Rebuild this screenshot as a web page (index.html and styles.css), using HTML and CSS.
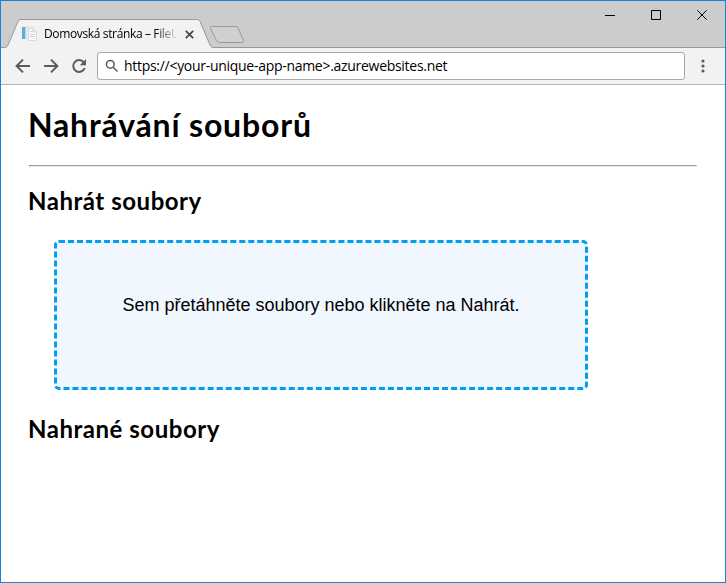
FILE: index.html
```html
<!DOCTYPE html>
<html lang="cs">
<head>
<meta charset="utf-8">
<title>Domovská stránka – FileUploader</title>
<link rel="stylesheet" href="styles.css">
</head>
<body>
<div class="window">
  <header class="titlebar">
    <svg class="tabs" width="250" height="47" viewBox="1 1 250 47">
      <path class="strip-line" d="M1 47.5H251"/>
      <path class="new-tab" d="M211.5 26.5H236Q237.5 26.500 238 28L243.500 40.500Q244.300 42.500 242 42.500H219.500Q217.500 42.500 216.500 40.500L210.500 28.500Q210 26.500 211.500 26.500Z"/>
      <path class="tab-fill" d="M1 48V47.500H5Q7 47.500 8 45L18 21.500Q19 19.500 21 19.500H197Q199 19.500 200 21.500L210 45Q211 47.500 213 47.500V48Z"/>
      <path class="tab-line" d="M1 47.500H5Q7 47.500 8 45L18 21.500Q19 19.500 21 19.500H197Q199 19.500 200 21.500L210 45Q211 47.500 213 47.500"/>
    </svg>
    <div class="tab">
      <svg class="favicon" width="16" height="16" viewBox="0 0 16 16">
        <path fill="#e4e9f0" d="M3 0h9v14H3z"/>
        <path fill="#65acd5" d="M0 1h3v12H0z"/>
        <path fill="#b5d6e8" d="M3 1h1v12H3z"/>
        <path fill="#f9fafc" stroke="#d3dae6" d="M6.500 2.500h5l3 3v9h-8z"/>
        <path fill="none" stroke="#c9d1de" d="M8 5.500h3M8 8.500h5M8 10.500h5M11.500 3v3h3"/>
      </svg>
      <span class="tab-title">Domovská stránka – FileU</span>
      <svg class="tab-close" width="9" height="9" viewBox="0 0 9 9"><path d="M.8.8l7.400 7.400M8.200.8L.8 8.200"/></svg>
    </div>
    <svg class="controls" width="106" height="12" viewBox="604 9 106 12">
      <path d="M605 15.500h10M651.500 10.500h9v9h-9zM697.300 10.300l9.400 9.400M706.700 10.300l-9.400 9.400"/>
    </svg>
  </header>
  <nav class="toolbar">
    <svg class="nav-icons" width="74" height="18" viewBox="14 57 74 18">
      <path d="M30 66H17M23 59.600L16.600 66L23 72.400M44 66H57M51 59.600L57.400 66L51 72.400"/>
      <path d="M83.700 62.200A5.900 5.900 0 1 0 84.700 68"/>
      <path class="solid" d="M86 59v6.200h-6.200z"/>
    </svg>
    <div class="address">
      <svg class="search" width="14" height="14" viewBox="0 0 14 14"><circle cx="5.300" cy="5.300" r="3.900"/><path d="M8.200 8.200l4.300 4.300"/></svg>
      <span class="url">https://&lt;your-unique-app-name&gt;.azurewebsites.net</span>
    </div>
    <svg class="menu" width="4" height="14" viewBox="0 0 4 14"><circle cx="2" cy="2" r="1.600"/><circle cx="2" cy="7" r="1.600"/><circle cx="2" cy="12" r="1.600"/></svg>
  </nav>
  <main class="page">
    <h1>Nahrávání souborů</h1>
    <hr>
    <h2 class="upload">Nahrát soubory</h2>
    <div class="dropzone">Sem přetáhněte soubory nebo klikněte na Nahrát.</div>
    <h2 class="uploaded">Nahrané soubory</h2>
  </main>
</div>
</body>
</html>
```

FILE: styles.css
```css
* { box-sizing: border-box; }
body { margin: 0; background: #fff; color: #000; }
svg { display: block; flex: none; }
.window {
  height: 583px;
  border: 1px solid #1883d7;
  overflow: hidden;
}
.titlebar {
  position: relative;
  display: flex;
  justify-content: space-between;
  height: 47px;
  background: #ccc;
  border-bottom: 1px solid #999;
}
.tabs { position: absolute; left: 0; top: 0; }
.tabs path { fill: none; stroke: #999; }
.tabs .new-tab { fill: #d0d0d0; }
.tabs .tab-fill { fill: #f2f2f2; stroke: none; }
.tab {
  position: relative;
  display: flex;
  align-items: center;
  height: 28px;
  margin: 19px 0 0 21px;
}
.tab-title {
  width: 133px;
  margin-left: 6px;
  white-space: nowrap;
  font: 12px/18px "Open Sans", sans-serif;
  letter-spacing: -0.36px;
  -webkit-mask-image: linear-gradient(to right, #000 110px, transparent 135px);
  mask-image: linear-gradient(to right, #000 110px, transparent 135px);
}
.tab-close { margin-left: 8px; }
.tab-close path { stroke: #454545; stroke-width: 1.7; }
.controls { margin: 8px 15px 0 0; }
.controls path { fill: none; stroke: #000; stroke-width: 1; }
.toolbar {
  display: flex;
  align-items: center;
  height: 37px;
  padding-left: 13px;
  background: #f2f2f2;
  border-bottom: 1px solid #b5b5b5;
}
.nav-icons path { fill: none; stroke: #5a5a5f; stroke-width: 2; }
.nav-icons .solid { fill: #5a5a5f; stroke: none; }
.address {
  display: flex;
  align-items: center;
  width: 588px;
  height: 28px;
  margin-left: 9px;
  padding-left: 7px;
  background: #fff;
  border: 1px solid #a8a8a8;
  border-radius: 3px;
}
.search { fill: none; stroke: #5a5a5f; stroke-width: 1.5; }
.url {
  margin-left: 5px;
  font: 14px/20px "Open Sans", sans-serif;
  letter-spacing: -0.29px;
  white-space: nowrap;
}
.menu { margin-left: 16px; fill: #5a5a5f; }
.page { padding: 0 28px; }
h1, h2 {
  margin: 0;
  font-family: "Trebuchet MS", Lato, sans-serif;
  font-weight: bold;
  white-space: nowrap;
  text-indent: -1px;
}
h1 { height: 80px; padding-top: 20px; font-size: 32px; line-height: 40px; letter-spacing: 0.82px; }
hr { margin: 0; }
h2 { font-size: 24px; line-height: 30px; letter-spacing: 0.53px; }
.upload { padding-top: 19px; height: 73px; }
.dropzone {
  width: 534px;
  height: 150px;
  margin-left: 25px;
  padding-top: 50px;
  background: #f0f7ff;
  border: 3px dashed #009fee;
  border-radius: 5px;
  text-align: center;
  white-space: nowrap;
  font: 18px/24px "Liberation Sans", Arial, sans-serif;
}
.uploaded { padding-top: 24px; }
```
